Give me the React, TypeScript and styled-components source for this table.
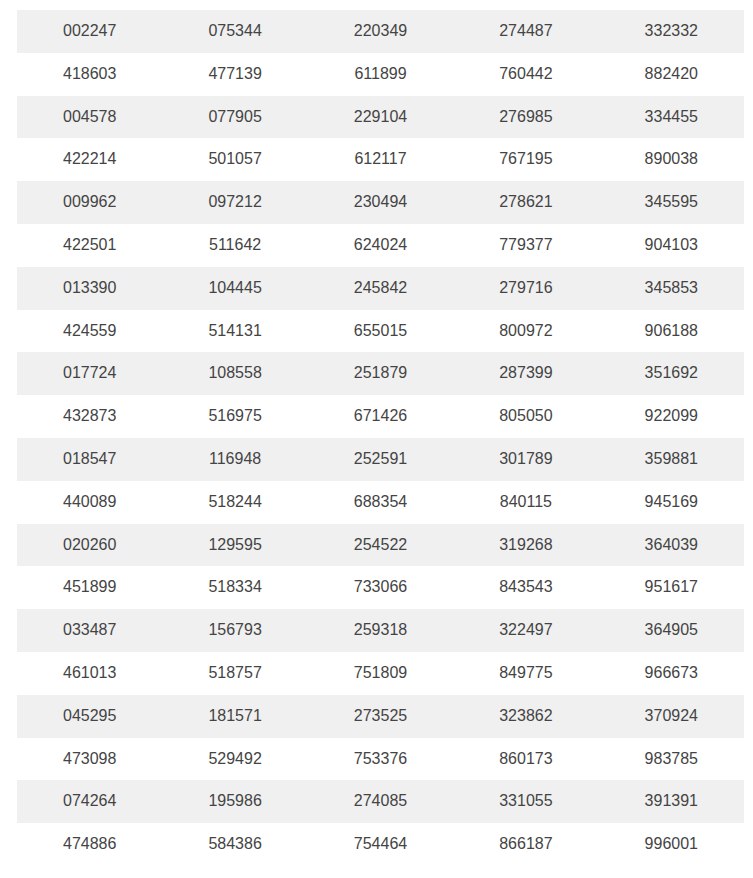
import React from "react";
import styled, { createGlobalStyle } from "styled-components";

const GlobalStyle = createGlobalStyle`
  html, body { margin: 0; padding: 0; background: #fff; }
  body { font-family: "Liberation Sans", Arial, sans-serif; }
`;

const Page = styled.div`
  padding: 10px 9px 0 17px;
`;

const Table = styled.div`
  display: flex;
  flex-direction: column;
  width: 727px;
`;

const Row = styled.div<{ $striped: boolean }>`
  display: grid;
  grid-template-columns: repeat(5, 1fr);
  background: ${(p) => (p.$striped ? "#f0f0f0" : "#ffffff")};
`;

const Cell = styled.div`
  padding: 10px 8px 10px;
  text-align: center;
  font-size: 16px;
  line-height: 22.8px;
  color: #444;
`;

const data: string[][] = [
  ["002247", "075344", "220349", "274487", "332332"],
  ["418603", "477139", "611899", "760442", "882420"],
  ["004578", "077905", "229104", "276985", "334455"],
  ["422214", "501057", "612117", "767195", "890038"],
  ["009962", "097212", "230494", "278621", "345595"],
  ["422501", "511642", "624024", "779377", "904103"],
  ["013390", "104445", "245842", "279716", "345853"],
  ["424559", "514131", "655015", "800972", "906188"],
  ["017724", "108558", "251879", "287399", "351692"],
  ["432873", "516975", "671426", "805050", "922099"],
  ["018547", "116948", "252591", "301789", "359881"],
  ["440089", "518244", "688354", "840115", "945169"],
  ["020260", "129595", "254522", "319268", "364039"],
  ["451899", "518334", "733066", "843543", "951617"],
  ["033487", "156793", "259318", "322497", "364905"],
  ["461013", "518757", "751809", "849775", "966673"],
  ["045295", "181571", "273525", "323862", "370924"],
  ["473098", "529492", "753376", "860173", "983785"],
  ["074264", "195986", "274085", "331055", "391391"],
  ["474886", "584386", "754464", "866187", "996001"],
];

export default function App() {
  return (
    <>
      <GlobalStyle />
      <Page>
        <Table>
          {data.map((row, i) => (
            <Row key={i} $striped={i % 2 === 0}>
              {row.map((v) => (
                <Cell key={v}>{v}</Cell>
              ))}
            </Row>
          ))}
        </Table>
      </Page>
    </>
  );
}
